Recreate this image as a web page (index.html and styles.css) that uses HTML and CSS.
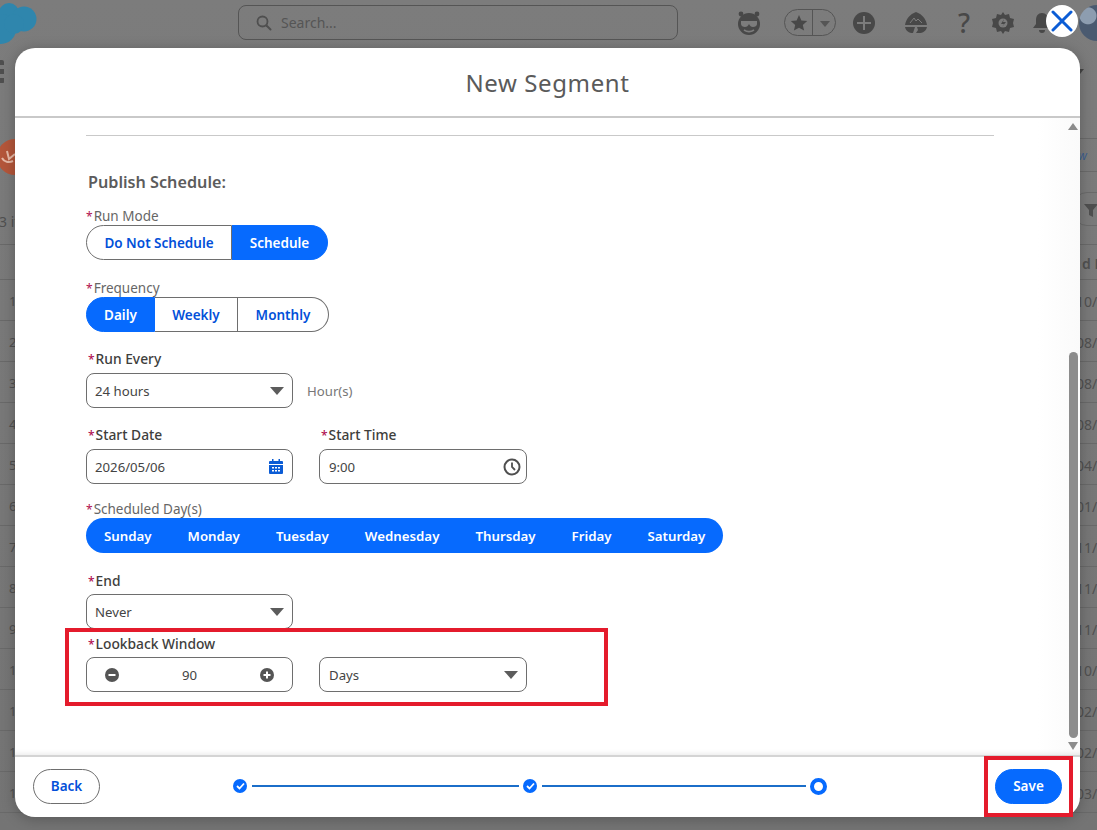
FILE: index.html
```html
<!DOCTYPE html>
<html lang="en">
<head>
  <meta charset="UTF-8" />
  <meta name="viewport" content="width=device-width, initial-scale=1" />
  <title>New Segment</title>
  <link rel="stylesheet" href="styles.css">
</head>
<body>

  <!-- Dimmed app behind the modal -->
  <div class="app">
    <header class="topbar">
      <svg class="cloud" width="40" height="46" viewBox="0 0 40 46"><g fill="#2f86ad"><circle cx="9" cy="13" r="10"/><circle cx="24" cy="19" r="12.500"/><circle cx="1" cy="29" r="15"/><circle cx="14" cy="24" r="10"/></g></svg>
      <div class="search">
        <svg width="16" height="16" viewBox="0 0 16 16"><circle cx="6.5" cy="6.5" r="5" fill="none" stroke="#4f4f4f" stroke-width="1.8"/><path d="M10.5 10.5l4 4" stroke="#4f4f4f" stroke-width="2" stroke-linecap="round"/></svg>
        <span>Search...</span>
      </div>
      <div class="tools">
        <svg class="tool-mascot" width="26" height="26" viewBox="0 0 26 26"><circle cx="13" cy="14" r="11" fill="#484848"/><circle cx="5" cy="4" r="2.4" fill="#484848"/><circle cx="21" cy="4" r="2.4" fill="#484848"/><path d="M5 11h16v3c0 2-2 3-4 3s-3-1-4-3c-1 2-2 3-4 3s-4-1-4-3z" fill="#7c7c7c"/><path d="M8 20c3 2 7 2 10 0" stroke="#7c7c7c" stroke-width="1.6" fill="none"/></svg>
        <div class="fav">
          <span class="fav-star"><svg width="18" height="18" viewBox="0 0 18 18"><path fill="#484848" d="M9 1l2.4 5.4 5.8.6-4.4 3.9 1.3 5.7L9 13.7l-5.100 2.900 1.300-5.700L.8 7l5.800-.6z"/></svg></span>
          <span class="fav-caret"></span>
        </div>
        <svg class="tool-plus" width="22" height="22" viewBox="0 0 22 22"><circle cx="11" cy="11" r="11" fill="#484848"/><path d="M11 4v14M4 11h14" stroke="#7c7c7c" stroke-width="2"/></svg>
        <svg class="tool-trail" width="22" height="22" viewBox="0 0 22 22"><path fill="#484848" d="M11 0c6 2 10 7 11 13H0C1 7 5 2 11 0z"/><path fill="#484848" d="M0 15h10l-2 6c-4 0-7-2-8-6zM12 15h10c-1 4-4 6-8 6h-3l2-3z"/><path d="M5 11l4-5 2 3 2-2 4 4" stroke="#7c7c7c" fill="none"/></svg>
        <span class="tool-help">?</span>
        <svg class="tool-gear" width="22" height="22" viewBox="0 0 22 22"><path fill="#484848" d="M11 0l2 3 4-1 1 4 4 1-1 4 1 4-4 1-1 4-4-1-2 3-2-3-4 1-1-4-4-1 1-4-1-4 4-1 1-4 4 1z"/><circle cx="11" cy="11" r="4.500" fill="#7c7c7c"/><path d="M12 7l-3 5h3l-2 3 4-5h-3z" fill="#484848"/></svg>
        <svg class="tool-bell" width="20" height="22" viewBox="0 0 20 22"><path fill="#484848" d="M10 1c4 0 6 3 6 7v4l3 4H1l3-4V8c0-4 2-7 6-7zM7 18h6c0 2-1 3-3 3s-3-1-3-3z"/></svg>
        <span class="avatar"></span>
      </div>
    </header>

    <div class="launcher"></div>
    <span class="page-caret"></span>
    <div class="subhead">
      <span class="app-logo"><svg width="20" height="16" viewBox="0 0 20 16"><path d="M2 9c2 4 7 5 11 3M7 2l2 8 6-5" fill="none" stroke="#e7b9a6" stroke-width="2"/></svg></span>
      <span class="new-btn">New</span>
    </div>
    <div class="listbar">
      <span class="count">13 items</span>
      <span class="filter-btn"><svg width="16" height="16" viewBox="0 0 16 16"><path fill="#4f4f4f" d="M1 2h14L10 8v7l-4-2V8z"/></svg></span>
    </div>

    <div class="table">
      <div class="row row-head"><span></span><span class="date-head">d Date</span></div>
      <div class="row"><span>1</span><span class="date">10/12/2025</span></div>
      <div class="row"><span>2</span><span class="date">08/12/2025</span></div>
      <div class="row"><span>3</span><span class="date">08/12/2025</span></div>
      <div class="row"><span>4</span><span class="date">08/12/2025</span></div>
      <div class="row"><span>5</span><span class="date">04/12/2025</span></div>
      <div class="row"><span>6</span><span class="date">01/12/2025</span></div>
      <div class="row"><span>7</span><span class="date">11/12/2025</span></div>
      <div class="row"><span>8</span><span class="date">11/12/2025</span></div>
      <div class="row"><span>9</span><span class="date">11/12/2025</span></div>
      <div class="row"><span>10</span><span class="date">10/12/2025</span></div>
      <div class="row"><span>11</span><span class="date">02/12/2025</span></div>
      <div class="row"><span>12</span><span class="date">02/12/2025</span></div>
      <div class="row"><span>13</span><span class="date">03/12/2025</span></div>
    </div>
  </div>

  <!-- Modal -->
  <section class="modal">
    <button class="close" aria-label="Close">
      <svg width="22" height="22" viewBox="0 0 22 22"><path d="M2 2l18 18M20 2L2 20" stroke="#0b5cd5" stroke-width="3" stroke-linecap="round"/></svg>
    </button>

    <header class="modal-head">
      <h1>New Segment</h1>
    </header>

    <div class="modal-body">
      <div class="form">
        <hr class="divider">
        <h2>Publish Schedule:</h2>

        <div class="field field-first">
          <label class="lbl-light"><i>*</i>Run Mode</label>
          <div class="group">
            <button class="seg seg-mode">Do Not Schedule</button>
            <button class="seg on seg-sched">Schedule</button>
          </div>
        </div>

        <div class="field field-freq">
          <label class="lbl-light"><i>*</i>Frequency</label>
          <div class="group">
            <button class="seg on seg-daily">Daily</button>
            <button class="seg seg-weekly">Weekly</button>
            <button class="seg seg-monthly">Monthly</button>
          </div>
        </div>

        <div class="field">
          <label class="lbl"><i>*</i>Run Every</label>
          <div class="line">
            <div class="input"><span>24 hours</span><b class="caret"></b></div>
            <span class="unit">Hour(s)</span>
          </div>
        </div>

        <div class="field">
          <div class="line line-wide">
            <div>
              <label class="lbl"><i>*</i>Start Date</label>
              <div class="input"><span>2026/05/06</span>
                <svg class="icon-date" width="14" height="15" viewBox="0 0 14 15"><path fill="#0b5cd5" d="M3 0h1.500v2h5V0H11v2h2a1 1 0 0 1 1 1v2H0V3a1 1 0 0 1 1-1h2zM0 6h14v8a1 1 0 0 1-1 1H1a1 1 0 0 1-1-1z"/><path fill="#fff" d="M3 8h2v1.500H3zM6 8h2v1.500H6zM9 8h2v1.500H9zM3 11h2v1.500H3zM6 11h2v1.500H6zM9 11h2v1.500H9z"/></svg>
              </div>
            </div>
            <div>
              <label class="lbl"><i>*</i>Start Time</label>
              <div class="input input-wide input-time"><span>9:00</span>
                <svg width="18" height="18" viewBox="0 0 18 18"><circle cx="9" cy="9" r="7.500" fill="none" stroke="#4f4f4f" stroke-width="2"/><path d="M9 4.500V9l3 3" fill="none" stroke="#4f4f4f" stroke-width="1.800"/></svg>
              </div>
            </div>
          </div>
        </div>

        <div class="field field-days">
          <label class="lbl-light"><i>*</i>Scheduled Day(s)</label>
          <div class="group group-days">
            <button class="day">Sunday</button>
            <button class="day">Monday</button>
            <button class="day">Tuesday</button>
            <button class="day">Wednesday</button>
            <button class="day">Thursday</button>
            <button class="day">Friday</button>
            <button class="day">Saturday</button>
          </div>
        </div>

        <div class="field field-end">
          <label class="lbl lbl-tight"><i>*</i>End</label>
          <div class="input"><span>Never</span><b class="caret"></b></div>
        </div>

        <div class="field field-look">
          <label class="lbl lbl-tight"><i>*</i>Lookback Window</label>
          <div class="line line-wide">
            <div class="input stepper">
              <svg width="14" height="14" viewBox="0 0 14 14"><circle cx="7" cy="7" r="7" fill="#555"/><path d="M3.500 7h7" stroke="#fff" stroke-width="2"/></svg>
              <span>90</span>
              <svg width="14" height="14" viewBox="0 0 14 14"><circle cx="7" cy="7" r="7" fill="#555"/><path d="M3.500 7h7M7 3.500v7" stroke="#fff" stroke-width="2"/></svg>
            </div>
            <div class="input input-wide"><span>Days</span><b class="caret"></b></div>
          </div>
          <div class="mark mark-look"></div>
        </div>
      </div>

      <div class="scrollbar">
        <span class="arrow-up"></span>
        <span class="thumb"></span>
        <span class="arrow-down"></span>
      </div>
    </div>

    <footer class="modal-foot">
      <button class="btn">Back</button>
      <div class="progress">
        <span class="step"><svg width="9" height="8" viewBox="0 0 9 8"><path d="M1 4l2.500 2.500L8 1.500" fill="none" stroke="#fff" stroke-width="1.800"/></svg></span>
        <span class="bar bar-first"></span>
        <span class="step"><svg width="9" height="8" viewBox="0 0 9 8"><path d="M1 4l2.500 2.500L8 1.500" fill="none" stroke="#fff" stroke-width="1.800"/></svg></span>
        <span class="bar bar-second"></span>
        <span class="step-now"></span>
      </div>
      <button class="btn btn-save">Save</button>
      <div class="mark mark-save"></div>
    </footer>
  </section>

</body>
</html>
```

FILE: styles.css
```css
* {
  margin: 0;
  padding: 0;
  box-sizing: border-box;
}

html, body {
  height: 100%;
  overflow: hidden;
}

body {
  font-family: 'Noto Sans', 'Open Sans', sans-serif;
  font-size: 13.2px;
  background: #7a7a7a;
  color: #444;
}

button {
  font-family: inherit;
  cursor: pointer;
}

/* Dimmed app */
.app {
  height: 830px;
  position: relative;
  color: #505050;
  background: linear-gradient(#7c7c7c, #747474);
  overflow: hidden;
}

.topbar {
  height: 46px;
  position: relative;
  display: flex;
  align-items: flex-start;
}

.cloud {
  flex: none;
  margin-right: 198px;
}

.search {
  flex: none;
  width: 440px;
  height: 35px;
  margin-top: 5px;
  border: 1px solid #555;
  border-radius: 8px;
  display: flex;
  align-items: center;
  gap: 9px;
  padding-left: 17px;
  color: #555;
  font-size: 14px;
}

.tools {
  flex: none;
  display: flex;
  align-items: center;
  margin-left: 58px;
  margin-top: 9px;
  height: 27px;
}

.tool-mascot { margin-right: 22px; }

.fav {
  width: 52px;
  height: 27px;
  border: 1px solid #555;
  border-radius: 14px;
  display: flex;
  margin-right: 17px;
}

.fav-star {
  width: 28px;
  border-right: 1px solid #555;
  display: flex;
  align-items: center;
  justify-content: center;
}

.fav-caret {
  margin: 11px 0 0 7px;
  border: 5px solid transparent;
  border-top: 6px solid #555;
  height: 0;
}

.tool-plus { margin-right: 30px; }
.tool-trail { margin-right: 31px; }

.tool-help {
  font-size: 27px;
  font-weight: 500;
  line-height: 27px;
  color: #484848;
  width: 15px;
  margin-right: 19px;
}

.tool-gear { margin-right: 18px; }
.tool-bell { margin-right: 27px; flex: none; }

.avatar {
  flex: none;
  width: 36px;
  height: 36px;
  border-radius: 50%;
  background: radial-gradient(circle at 25% 30%, #8d9db0 0 8px, #4a5a70 9px);
}

.launcher {
  width: 4px;
  height: 24px;
  margin-top: 14px;
  background: repeating-linear-gradient(#4f4f4f 0 5px, transparent 5px 9px);
  border-radius: 0 2px 2px 0;
}

.page-caret {
  position: absolute;
  top: 69px;
  right: 13px;
  border: 4px solid transparent;
  border-top: 5px solid #444;
}

.subhead {
  display: flex;
  justify-content: space-between;
  align-items: center;
  margin-top: 53px;
  height: 36px;
}

.app-logo {
  width: 36px;
  height: 36px;
  margin-left: -3px;
  margin-top: 4px;
  border-radius: 50%;
  background: #b4563a;
  padding: 10px 0 0 3px;
}

.new-btn {
  width: 60px;
  height: 34px;
  margin-right: -20px;
  border: 1px solid #6a6a6a;
  border-radius: 14px 0 0 14px;
  font-size: 12px;
  font-style: italic;
  color: #3d5f90;
  line-height: 34px;
  text-align: right;
  padding-right: 29px;
}

.listbar {
  display: flex;
  justify-content: space-between;
  margin-top: 19px;
  height: 34px;
}

.count {
  margin-left: -9px;
  margin-top: 20px;
  white-space: nowrap;
  font-size: 14px;
}

.filter-btn {
  width: 50px;
  height: 34px;
  margin-right: -26px;
  border: 1px solid #6a6a6a;
  border-radius: 14px 0 0 14px;
  padding: 9px 0 0 9px;
}

.table {
  margin-top: 18px;
}

.row {
  height: 41px;
  border-bottom: 1px solid #696969;
  display: flex;
  justify-content: space-between;
  align-items: center;
  padding-left: 9px;
  padding-top: 2px;
}

.row-head {
  height: 36px;
  border-top: 1px solid #696969;
}

.date-head {
  width: 15px;
  white-space: nowrap;
  font-weight: 600;
  font-size: 14px;
}

.date {
  width: 21px;
  white-space: nowrap;
  font-size: 14px;
}

/* Modal */
.modal {
  position: absolute;
  left: 15px;
  top: 48px;
  width: 1065px;
  height: 769px;
  background: #fff;
  border-radius: 20px;
  display: flex;
  flex-direction: column;
  box-shadow: 0 2px 14px rgba(0, 0, 0, 0.25);
}

.close {
  position: absolute;
  top: -43px;
  right: 2px;
  width: 32px;
  height: 32px;
  border: none;
  border-radius: 50%;
  background: #fff;
  display: flex;
  align-items: center;
  justify-content: center;
}

.modal-head {
  height: 70px;
  border-bottom: 2px solid #c9c9c9;
  display: flex;
  align-items: center;
  justify-content: center;
  flex: none;
}

.modal-head h1 {
  font-weight: 400;
  font-size: 24px;
  color: #5a5a5a;
  letter-spacing: 0.6px;
}

.modal-body {
  flex: 1;
  display: flex;
  min-height: 0;
  padding-left: 71px;
  background: linear-gradient(to right, #fff 96%, #fafafa);
  box-shadow: inset 0 -6px 6px -6px rgba(0, 0, 0, 0.12);
}

.form {
  width: 908px;
  flex: none;
}

.divider {
  border: none;
  border-top: 1px solid #c9c9c9;
  margin-top: 17px;
}

h2 {
  font-size: 16.2px;
  font-weight: 600;
  color: #5c5c5c;
  line-height: 22px;
  margin: 35px 0 0 2px;
}

.field {
  margin-top: 18px;
}

.field-first { margin-top: 14px; }
.field-freq { margin-top: 19px; }
.field-days { margin-top: 16px; }
.field-end { margin-top: 19px; }
.field-look { margin-top: 6px; position: relative; }

label {
  display: block;
  line-height: 18px;
  white-space: nowrap;
}

label i {
  font-style: normal;
  font-size: 12px;
  line-height: 0;
  color: #b01050;
  margin-right: 1px;
}

.lbl-light {
  color: #666;
  font-size: 13.5px;
}

.lbl {
  color: #3e3e3c;
  font-weight: 500;
  font-size: 13.8px;
  padding: 0 0 5px 2px;
}

.lbl-tight { padding-bottom: 4px; }

.group {
  display: inline-flex;
  height: 35px;
  vertical-align: top;
}

.seg {
  height: 35px;
  border: 1px solid #6e6e6e;
  border-left: none;
  background: #fff;
  color: #0250d9;
  font-size: 13.5px;
  font-weight: 600;
}

.seg:first-child {
  border-left: 1px solid #6e6e6e;
  border-radius: 18px 0 0 18px;
}

.seg:last-child {
  border-radius: 0 18px 18px 0;
}

.seg.on {
  background: #066afe;
  border-color: #066afe;
  color: #fff;
}

.seg-mode { width: 146px; }
.seg-sched { width: 96px; }
.seg-daily { width: 69px; }
.seg-weekly { width: 83px; }
.seg-monthly { width: 91px; }

.group-days {
  width: 637px;
  background: #066afe;
  border-radius: 18px;
  padding: 0 18px;
  gap: 36px;
}

.day {
  border: none;
  background: none;
  color: #fff;
  font-size: 13.27px;
  font-weight: 600;
  white-space: nowrap;
}

.line {
  display: flex;
  align-items: center;
  gap: 14px;
}

.line-wide {
  gap: 26px;
  align-items: flex-end;
}

.input {
  width: 207px;
  height: 35px;
  border: 1px solid #6e6e6e;
  border-radius: 8px;
  background: #fff;
  display: flex;
  align-items: center;
  justify-content: space-between;
  padding: 0 8px;
  color: #444;
}

.input-wide {
  width: 208px;
  padding-left: 9px;
}

.input-time {
  padding-right: 5px;
}

.icon-date {
  margin-right: 1px;
}

.caret {
  width: 0;
  height: 0;
  border-left: 7px solid transparent;
  border-right: 7px solid transparent;
  border-top: 8px solid #5c5c5c;
}

.unit {
  color: #777;
}

.stepper {
  padding: 0 18px;
}

.mark {
  position: absolute;
  border: 4px solid #e41b2c;
  pointer-events: none;
}

.mark-look {
  left: -21px;
  top: -7px;
  width: 543px;
  height: 78px;
}

.mark-save {
  right: 7px;
  top: -1px;
  width: 89px;
  height: 61px;
}

/* Scrollbar */
.scrollbar {
  width: 12px;
  margin-left: 73px;
  display: flex;
  flex-direction: column;
  align-items: center;
}

.arrow-up {
  margin-top: 5px;
  border-left: 5px solid transparent;
  border-right: 5px solid transparent;
  border-bottom: 7px solid #8c8c8c;
}

.thumb {
  width: 9px;
  height: 386px;
  margin-top: 222px;
  background: #8c8c8c;
  border-radius: 5px;
}

.arrow-down {
  margin-top: 4px;
  border-left: 5px solid transparent;
  border-right: 5px solid transparent;
  border-top: 8px solid #8c8c8c;
}

/* Footer */
.modal-foot {
  height: 62px;
  flex: none;
  position: relative;
  border-top: 2px solid #d4d4d4;
  display: flex;
  align-items: center;
  padding: 0 18px 2px;
}

.btn {
  width: 67px;
  height: 35px;
  border: 1px solid #6e6e6e;
  border-radius: 18px;
  background: #fff;
  color: #0250d9;
  font-size: 13.5px;
  font-weight: 600;
}

.btn-save {
  margin-left: auto;
  background: #066afe;
  border-color: #066afe;
  color: #fff;
}

.progress {
  width: 594px;
  margin-left: 133px;
  display: flex;
  align-items: center;
}

.step {
  flex: none;
  width: 14px;
  height: 14px;
  border-radius: 50%;
  background: #066afe;
  display: flex;
  align-items: center;
  justify-content: center;
}

.bar {
  height: 2px;
  margin: 0 4px 0 5px;
  background: #1b6ec9;
  flex: none;
}

.bar-first { width: 267px; }
.bar-second { width: 264px; }

.step-now {
  flex: none;
  width: 17px;
  height: 17px;
  border: 4px solid #066afe;
  border-radius: 50%;
  background: #fff;
}
```
